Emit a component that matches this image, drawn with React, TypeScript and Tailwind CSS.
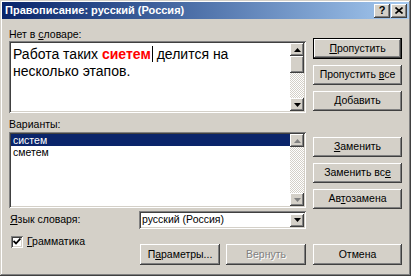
import React from "react";

const raised =
  "shadow-[inset_-1px_-1px_#404040,inset_1px_1px_#ffffff,inset_-2px_-2px_#808080,inset_2px_2px_#d4d0c8]";
const sunken =
  "shadow-[inset_1px_1px_#808080,inset_-1px_-1px_#ffffff,inset_2px_2px_#404040,inset_-2px_-2px_#d4d0c8]";
const checker =
  "bg-[repeating-conic-gradient(#d4d0c8_0%_25%,#ffffff_0%_50%)] bg-[length:2px_2px]";

function Btn({
  children,
  isDefault,
  disabled,
  className = "",
}: {
  children: React.ReactNode;
  isDefault?: boolean;
  disabled?: boolean;
  className?: string;
}) {
  return (
    <div
      className={`${isDefault ? "border border-black" : ""} ${className} bg-[#d4d0c8]`}
    >
      <div
        className={`${raised} h-full flex items-center justify-center text-[10.5px] ${
          disabled ? "text-[#808080] [text-shadow:1px_1px_#ffffff]" : "text-black"
        }`}
      >
        <span>{children}</span>
      </div>
    </div>
  );
}

function ArrowBtn({ up, dim }: { up?: boolean; dim?: boolean }) {
  return (
    <div className={`${raised} w-[14px] h-[13px] bg-[#d4d0c8] flex items-center justify-center`}>
      <svg width="7" height="4" viewBox="0 0 7 4">
        <path
          d={up ? "M0 4 L3.5 0 L7 4 Z" : "M0 0 L3.5 4 L7 0 Z"}
          fill={dim ? "#808080" : "#000"}
        />
      </svg>
    </div>
  );
}

function ScrollBar({ thumb, dim }: { thumb?: boolean; dim?: boolean }) {
  return (
    <div className="w-[14px] h-full flex flex-col">
      <ArrowBtn up dim={dim} />
      {thumb && <div className={`${raised} h-[17px] bg-[#d4d0c8]`} />}
      <div className={`flex-1 ${checker}`} />
      <ArrowBtn dim={dim} />
    </div>
  );
}

const U = ({ children }: { children: React.ReactNode }) => (
  <span className="underline underline-offset-1">{children}</span>
);

export default function App() {
  return (
    <div
      className="w-[411px] h-[276px] bg-[#d4d0c8] p-[2px] flex flex-col shadow-[inset_-1px_-1px_#404040,inset_1px_1px_#d4d0c8,inset_-2px_-2px_#808080,inset_2px_2px_#ffffff] overflow-hidden"
      style={{ fontFamily: '"Liberation Sans", Arial, sans-serif' }}
    >
      {/* Title bar */}
      <div className="h-[17px] shrink-0 bg-gradient-to-r from-[#0a246a] to-[#a6caf0] flex items-center pl-[3px] pr-[2px]">
        <span className="text-white font-bold text-[11px] leading-none flex-1">
          Правописание: русский (Россия)
        </span>
        <div className={`${raised} w-[16px] h-[14px] bg-[#d4d0c8] flex items-center justify-center text-[11px] font-bold leading-none`}>
          ?
        </div>
        <div className={`${raised} w-[16px] h-[14px] bg-[#d4d0c8] flex items-center justify-center ml-[1px]`}>
          <svg width="8" height="7" viewBox="0 0 8 7">
            <path d="M0.5 0.5 L7.5 6.5 M7.5 0.5 L0.5 6.5" stroke="#000" strokeWidth="1.6" />
          </svg>
        </div>
      </div>

      {/* Body */}
      <div className="flex-1 pl-[7px] pr-[7px] flex flex-col text-[10.5px] text-black">
        <div className="flex gap-[7px] mt-[9px]">
          {/* left column */}
          <div className="w-[297px] flex flex-col">
            <div className="h-[12px] leading-[12px]">
              Нет в <U>с</U>ловаре:
            </div>
            <div className={`${sunken} bg-white h-[72px] mt-[1px] p-[2px] flex`}>
              <div className="flex-1 pl-[2px] pt-[3px] text-[14px] leading-[17px]">
                Работа таких{" "}
                <span className="text-[#ff0000] font-bold">сиетем</span>
                <span className="inline-block w-px h-[16px] bg-black align-[-3px] ml-[1px]" />{" "}
                делится на
                <br />
                несколько этапов.
              </div>
              <ScrollBar thumb />
            </div>
            <div className="h-[12px] leading-[12px] mt-[5px]">Варианты:</div>
            <div className={`${sunken} bg-white h-[76px] mt-[2px] p-[2px] flex`}>
              <div className="flex-1 flex flex-col leading-[12px]">
                <div className="bg-[#0a246a] text-white pl-[2px]">систем</div>
                <div className="pl-[2px]">сметем</div>
              </div>
              <ScrollBar dim />
            </div>
          </div>

          {/* right column */}
          <div className="w-[89px] flex flex-col pt-[10px]">
            <Btn isDefault className="h-[21px]">
              <U>П</U>ропустить
            </Btn>
            <Btn className="h-[20px] mt-[6px]">
              Пропустить <U>в</U>се
            </Btn>
            <Btn className="h-[20px] mt-[6px]">
              <U>Д</U>обавить
            </Btn>
            <Btn className="h-[20px] mt-[26px]">
              <U>З</U>аменить
            </Btn>
            <Btn className="h-[20px] mt-[6px]">
              Заменить вс<U>е</U>
            </Btn>
            <Btn className="h-[20px] mt-[6px]">
              Ав<U>т</U>озамена
            </Btn>
          </div>
        </div>

        {/* language row */}
        <div className="flex items-center mt-[2px]">
          <div className="w-[130px] pl-[1px]">
            <U>Я</U>зык словаря:
          </div>
          <div className={`${sunken} bg-white w-[167px] h-[18px] p-[2px] flex items-center`}>
            <span className="flex-1 pl-[1px]">русский (Россия)</span>
            <ArrowBtn />
          </div>
        </div>

        {/* bottom row */}
        <div className="flex mt-[5px]">
          <div className="w-[131px] flex items-start">
            <div className="flex items-center gap-[4px] pl-[2px]">
              <div className={`${sunken} w-[12px] h-[12px] bg-white flex items-center justify-center`}>
                <svg width="8" height="7" viewBox="0 0 8 7">
                  <path d="M0.5 3 L3 5.5 L7.5 0.5" stroke="#000" strokeWidth="1.8" fill="none" />
                </svg>
              </div>
              <span>
                <U>Г</U>рамматика
              </span>
            </div>
          </div>
          <div className="flex gap-[6px] mt-[10px]">
            <Btn className="w-[80px] h-[21px]">
              П<U>а</U>раметры...
            </Btn>
            <Btn disabled className="w-[80px] h-[21px]">
              Вернуть
            </Btn>
            <Btn className="w-[89px] h-[21px] ml-[1px]">Отмена</Btn>
          </div>
        </div>
      </div>
    </div>
  );
}
